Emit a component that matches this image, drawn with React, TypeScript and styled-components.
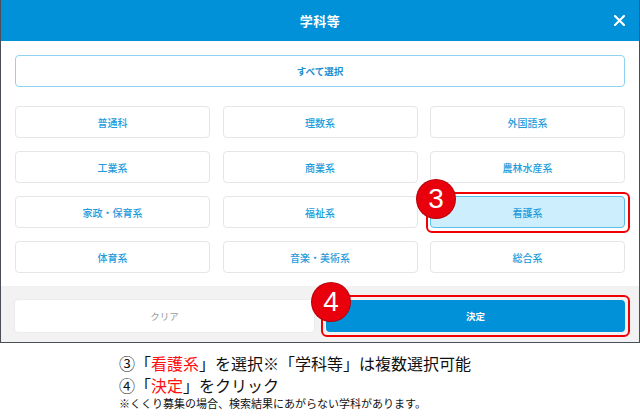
import React from "react";
import styled, { createGlobalStyle } from "styled-components";

const Global = createGlobalStyle`
  html, body { margin: 0; padding: 0; background: #fff; }
  body { width: 640px; height: 417px; overflow: hidden; font-family: "Noto Sans CJK JP", "Noto Sans", sans-serif; }
`;

const Page = styled.div`
  width: 640px;
  height: 417px;
  display: flex;
  flex-direction: column;
  background: #fff;
`;

const Modal = styled.div`
  height: 343px;
  box-sizing: border-box;
  border-left: 1px solid #4a4f55;
  border-right: 1px solid #4a4f55;
  border-bottom: 1px solid #4a4f55;
  display: flex;
  flex-direction: column;
  background: #fff;
`;

const Header = styled.div`
  height: 41px;
  flex: none;
  background: #0091d9;
  display: grid;
  grid-template-columns: 1fr auto 1fr;
  align-items: center;
  color: #fff;
`;

const Title = styled.div`
  grid-column: 2;
  font-size: 13px;
  font-weight: 700;
  letter-spacing: 0.5px;
`;

const Close = styled.div`
  grid-column: 3;
  justify-self: end;
  margin-right: 14px;
  display: flex;
  align-items: center;
`;

const Body = styled.div`
  flex: 1;
  padding: 14px 14px 0;
  display: flex;
  flex-direction: column;
  gap: 19px;
`;

const SelectAll = styled.div`
  height: 32px;
  box-sizing: border-box;
  border: 1px solid #8fd2f2;
  border-radius: 4px;
  display: flex;
  align-items: center;
  justify-content: center;
  color: #1a8ed1;
  font-size: 9.5px;
  font-weight: 700;
`;

const Grid = styled.div`
  display: grid;
  grid-template-columns: repeat(3, 1fr);
  column-gap: 12.5px;
  row-gap: 13px;
`;

const Cell = styled.div`
  position: relative;
`;

const Choice = styled.div<{ $selected?: boolean }>`
  height: 32px;
  box-sizing: border-box;
  border: 1px solid ${(p) => (p.$selected ? "#5cbdea" : "#e6e6e6")};
  background: ${(p) => (p.$selected ? "#cdeefc" : "#fff")};
  border-radius: 4px;
  display: flex;
  align-items: center;
  justify-content: center;
  color: #239bdb;
  font-size: 10px;
  font-weight: 500;
`;

const Highlight = styled.div<{ $inset: string }>`
  position: absolute;
  inset: ${(p) => p.$inset};
  border: 2px solid #f00000;
  border-radius: 6px;
  pointer-events: none;
`;

const Badge = styled.div<{ $left: number; $top: number }>`
  position: absolute;
  left: ${(p) => p.$left}px;
  top: ${(p) => p.$top}px;
  width: 38px;
  height: 38px;
  border-radius: 50%;
  background: #e8000c;
  box-shadow: 0 0 0 1px #b80008;
  color: #fff;
  font-family: "Liberation Sans", Arial, sans-serif;
  font-size: 28px;
  line-height: 38px;
  text-align: center;
  z-index: 2;
`;

const Footer = styled.div`
  margin-top: 13px;
  background: #f2f2f2;
  padding: 14px 14px 10px;
  display: grid;
  grid-template-columns: 1fr 1fr;
  gap: 12px;
`;

const FooterButton = styled.div<{ $primary?: boolean }>`
  height: 32px;
  border-radius: 4px;
  display: flex;
  align-items: center;
  justify-content: center;
  font-size: 9.5px;
  background: ${(p) => (p.$primary ? "#0091d9" : "#fff")};
  color: ${(p) => (p.$primary ? "#fff" : "#9a9a9a")};
  font-weight: ${(p) => (p.$primary ? 700 : 400)};
  box-shadow: ${(p) => (p.$primary ? "none" : "0 0 0 1px #ececec")};
`;

const Caption = styled.div`
  padding: 9px 0 0 119px;
  color: #111;
`;

const Line = styled.div`
  font-size: 16px;
  line-height: 22px;
  letter-spacing: 0;
  white-space: nowrap;
`;

const Red = styled.span`
  color: #ff1010;
`;

const Note = styled.div`
  font-size: 11px;
  line-height: 14px;
  white-space: nowrap;
`;

const items = [
  "普通科", "理数系", "外国語系",
  "工業系", "商業系", "農林水産系",
  "家政・保育系", "福祉系", "看護系",
  "体育系", "音楽・美術系", "総合系",
];

export default function App() {
  return (
    <Page>
      <Global />
      <Modal>
        <Header>
          <Title>学科等</Title>
          <Close>
            <svg width="11" height="11" viewBox="0 0 11 11">
              <path d="M1 1 L10 10 M10 1 L1 10" stroke="#fff" strokeWidth="2.2" strokeLinecap="round" />
            </svg>
          </Close>
        </Header>
        <Body>
          <SelectAll>すべて選択</SelectAll>
          <Grid>
            {items.map((it) => {
              const sel = it === "看護系";
              return (
                <Cell key={it}>
                  <Choice $selected={sel}>{it}</Choice>
                  {sel && (
                    <>
                      <Highlight $inset="-4px -5px -5px -4px" />
                      <Badge $left={-13} $top={-16}>3</Badge>
                    </>
                  )}
                </Cell>
              );
            })}
          </Grid>
        </Body>
        <Footer>
          <FooterButton>クリア</FooterButton>
          <Cell>
            <FooterButton $primary>決定</FooterButton>
            <Highlight $inset="-5px -5px -5px -5px" />
            <Badge $left={-14} $top={-17}>4</Badge>
          </Cell>
        </Footer>
      </Modal>
      <Caption>
        <Line>③「<Red>看護系</Red>」を選択※「学科等」は複数選択可能</Line>
        <Line>④「<Red>決定</Red>」をクリック</Line>
        <Note>※くくり募集の場合、検索結果にあがらない学科があります。</Note>
      </Caption>
    </Page>
  );
}
